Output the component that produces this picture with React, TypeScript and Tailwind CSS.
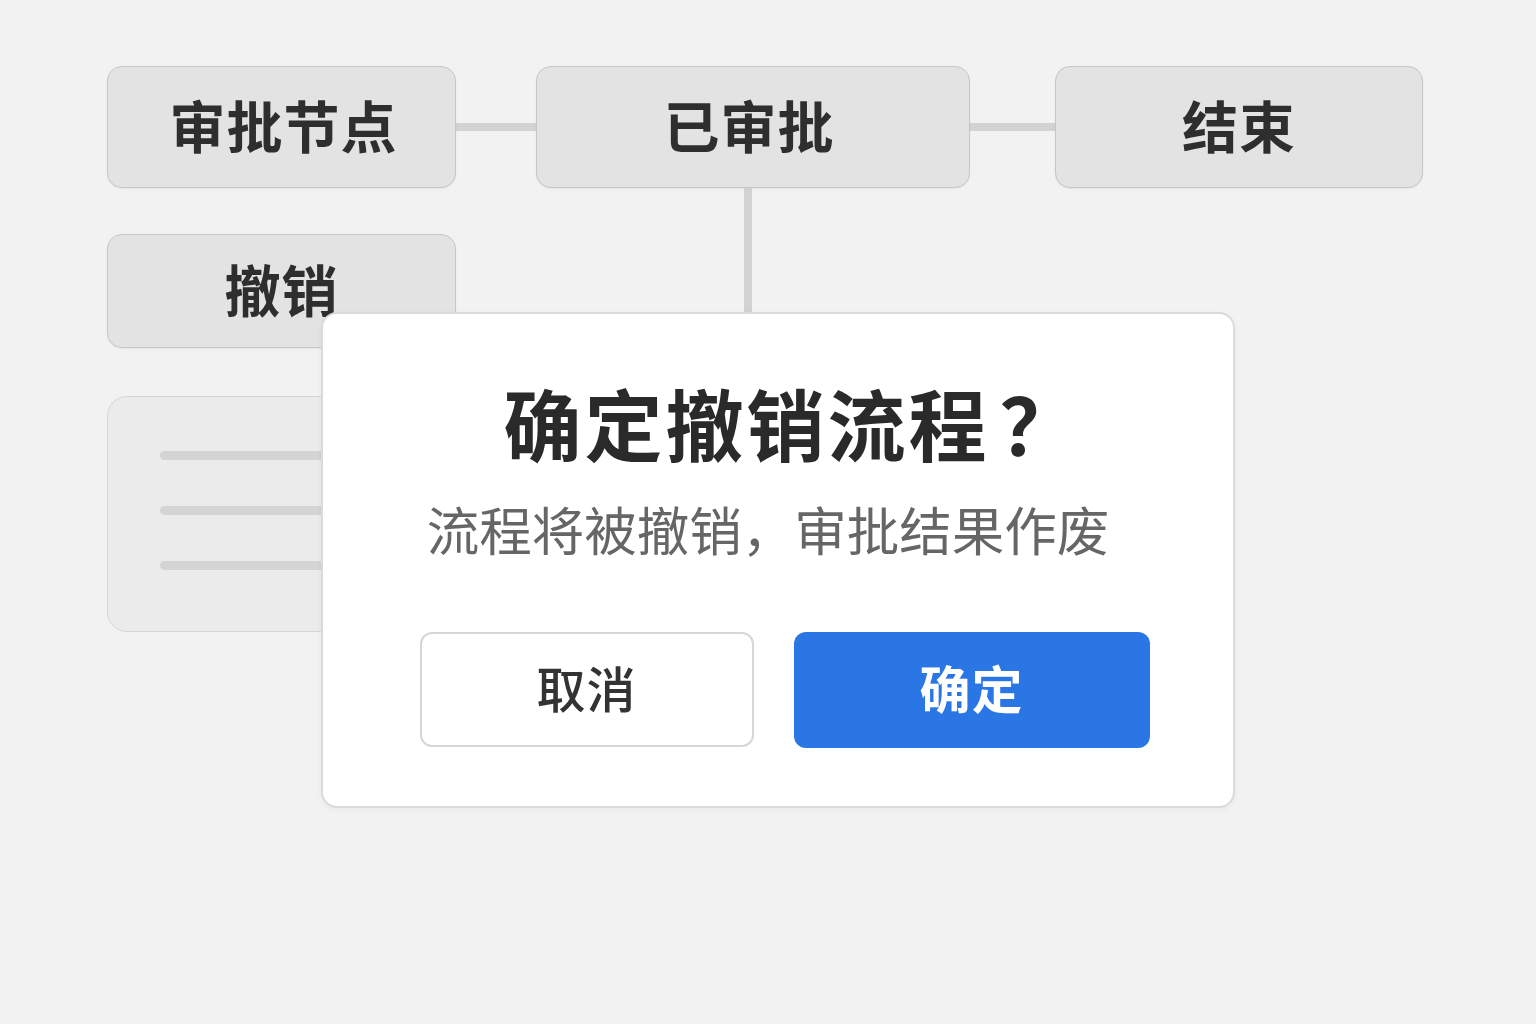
import React from 'react';

const cjk = { fontFamily: '"Noto Sans CJK SC", "Noto Sans", sans-serif' };

function Node({ label, className = '' }: { label: string; className?: string }) {
  return (
    <div
      className={`relative flex items-center justify-center rounded-[15px] border-[1.5px] border-[#c6c6c6] bg-[#e3e3e3] pb-[6px] shadow-[0_1px_2px_rgba(0,0,0,0.06)] ${className}`}
    >
      <span className="text-[56px] font-bold leading-none tracking-[1px] text-[#2e2e2e]">{label}</span>
    </div>
  );
}

export default function App() {
  return (
    <div className="relative h-[1024px] w-[1536px] overflow-hidden bg-[#f2f2f2]" style={cjk}>
      {/* 流程图背景 */}
      <div className="flex flex-col items-start pl-[107px] pt-[66px]">
        <div className="flex items-center">
          <Node label="审批节点" className="h-[122px] w-[349px] pl-[4px]" />
          <div className="h-[8px] w-[80px] bg-[#d2d2d2]" />
          <div className="relative">
            <Node label="已审批" className="h-[122px] w-[434px] pr-[8px]" />
            <div className="absolute left-[208px] top-full h-[126px] w-[8px] bg-[#d2d2d2]" />
          </div>
          <div className="h-[8px] w-[85px] bg-[#d2d2d2]" />
          <Node label="结束" className="h-[122px] w-[368px]" />
        </div>

        <Node label="撤销" className="mt-[46px] h-[114px] w-[349px]" />

        <div className="mt-[48px] flex h-[236px] w-[420px] flex-col gap-[46px] rounded-[20px] border-[1.5px] border-[#d6d6d6] bg-[#ebebeb] pl-[52px] pt-[54px]">
          <div className="h-[9px] w-[300px] rounded-full bg-[#d4d4d4]" />
          <div className="h-[9px] w-[300px] rounded-full bg-[#d4d4d4]" />
          <div className="h-[9px] w-[300px] rounded-full bg-[#d4d4d4]" />
        </div>
      </div>

      {/* 确认弹窗 */}
      <div className="absolute left-[321px] top-[312px] flex h-[496px] w-[914px] flex-col items-center rounded-[16px] border-2 border-[#dadada] bg-white pt-[69px] shadow-[0_2px_6px_rgba(0,0,0,0.04)]">
        <h1 className="ml-[28px] flex items-baseline text-[78px] font-bold leading-none tracking-[3px] text-[#2a2a2a]">
          确定撤销流程<span className="ml-[10px]">？</span>
        </h1>
        <p className="mr-[20px] mt-[41px] text-[52.5px] leading-none text-[#666666]">流程将被撤销，审批结果作废</p>
        <div className="ml-[13px] mt-[77px] flex gap-[40px]">
          <button className="flex h-[115px] w-[334px] items-center justify-center rounded-[12px] border-2 border-[#d6d6d6] bg-white pb-[5px]">
            <span className="text-[49px] font-medium leading-none tracking-[1px] text-[#333333]">取消</span>
          </button>
          <button className="flex h-[116px] w-[356px] items-center justify-center rounded-[12px] bg-[#2b76e5] pb-[5px]">
            <span className="text-[51px] font-bold leading-none tracking-[1px] text-white">确定</span>
          </button>
        </div>
      </div>
    </div>
  );
}
